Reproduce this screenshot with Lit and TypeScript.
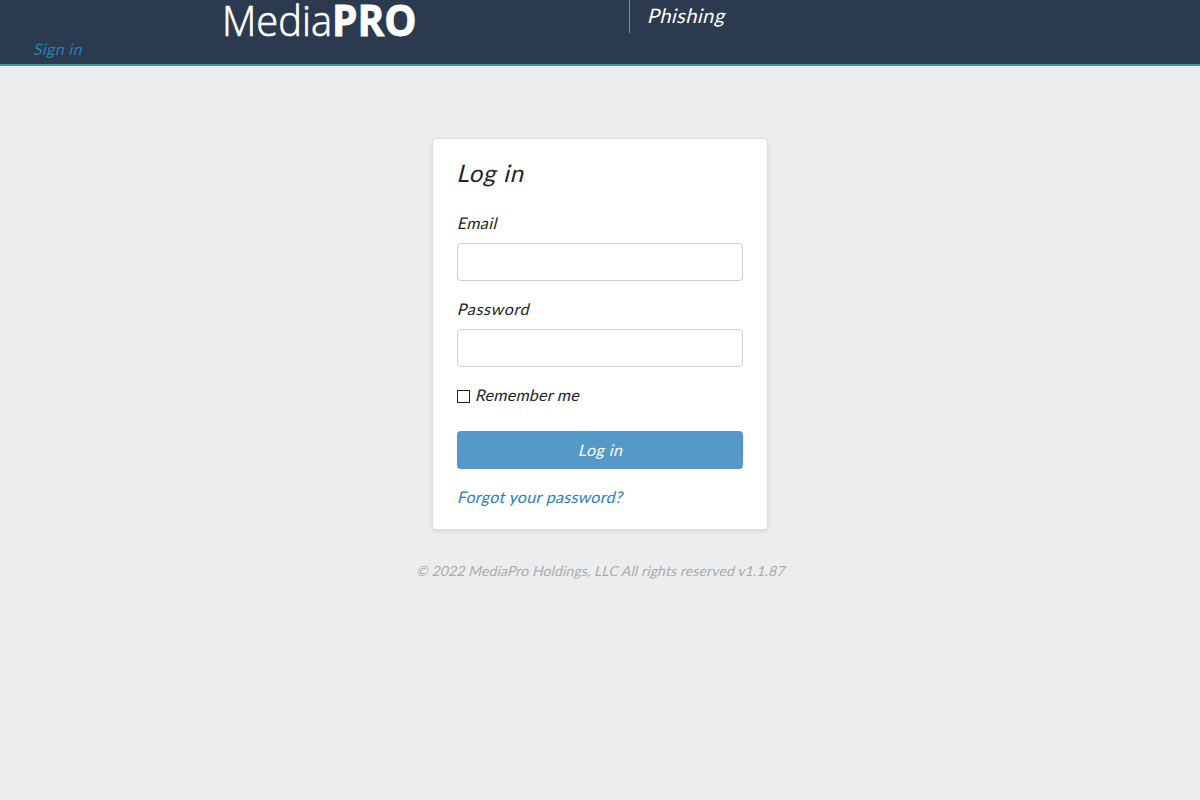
import { LitElement, html, css } from "lit";
import { customElement } from "lit/decorators.js";

@customElement("app-root")
export class AppRoot extends LitElement {
  static styles = css`
    :host {
      display: block;
      min-height: 100vh;
      background: #ecedef;
      color: #212529;
      font: 400 16px/24px Lato, "Open Sans", sans-serif;
    }
    * { box-sizing: border-box; }
    a { color: #2780bd; text-decoration: none; }
    .s { display: inline-block; white-space: nowrap; transform: skewX(-14deg); transform-origin: 0 72%; }
    header {
      height: 66px;
      background: #2c3a50;
      border-bottom: 2px solid #42989e;
      display: grid;
      grid-template-columns: 222px 407px 1fr;
      grid-template-rows: 37px 27px;
    }
    .logo { grid-column: 2; display: block; overflow: visible; fill: #fff; stroke: #fff; font-family: "Open Sans", sans-serif; }
    .light { font-weight: 300; stroke-width: 0.7px; }
    .bold { font-weight: 700; stroke-width: 0.9px; }
    .product {
      height: 33px;
      border-left: 1px solid #808995;
      padding-left: 17px;
      color: #fff;
      font-size: 20px;
      line-height: 31px;
      letter-spacing: 0.45px;
    }
    .signin { grid-column: 1; padding-left: 33px; line-height: 24px; letter-spacing: 0.35px; }
    main { padding-top: 72px; display: flex; flex-direction: column; align-items: center; }
    .card {
      width: 336px;
      height: 392px;
      padding: 20px 24px 0;
      background: #fff;
      border: 1px solid #dcdee1;
      border-radius: 4px;
      box-shadow: 0 2px 4px rgba(0, 0, 0, 0.09);
      display: flex;
      flex-direction: column;
    }
    h1 { margin: 0 0 24px; font-size: 24px; line-height: 28px; font-weight: 400; letter-spacing: 0.75px; }
    label { display: block; height: 24px; margin-bottom: 8px; letter-spacing: 0.4px; }
    .wide { letter-spacing: 0.65px; }
    .field {
      width: 100%;
      height: 38px;
      flex: none;
      margin: 0 0 16px;
      border: 1px solid #ced0d8;
      border-radius: 4px;
      background: #fff;
      outline: none;
    }
    .remember { display: flex; align-items: center; gap: 5px; height: 24px; margin-bottom: 24px; letter-spacing: 0.25px; }
    .box { appearance: none; width: 13px; height: 13px; margin: 2px 0 0; border: 1px solid #222; background: #fff; }
    button {
      height: 38px;
      flex: none;
      border: 0;
      padding: 0;
      border-radius: 4px;
      background: #5599c9;
      color: #fff;
      font: inherit;
      letter-spacing: 0.45px;
    }
    .forgot { margin-top: 16px; letter-spacing: 0.3px; }
    footer { margin-top: 30px; padding-left: 1px; font-size: 14px; line-height: 22px; color: #a9abac; letter-spacing: 0.12px; }
  `;

  render() {
    return html`
      <header>
        <svg class="logo" width="196" height="37" role="img" aria-label="MediaPRO">
          <text class="light" x="0" y="36.3" font-size="42.5" textLength="110" lengthAdjust="spacingAndGlyphs">Media</text>
          <text class="bold" x="110" y="36.3" font-size="42.5" textLength="84.5" lengthAdjust="spacingAndGlyphs">PRO</text>
        </svg>
        <div class="product"><span class="s">Phishing</span></div>
        <a class="signin"><span class="s">Sign in</span></a>
      </header>
      <main>
        <form class="card">
          <h1><span class="s">Log in</span></h1>
          <label for="email"><span class="s">Email</span></label>
          <input class="field" id="email" type="email" />
          <label for="password"><span class="s wide">Password</span></label>
          <input class="field" id="password" type="password" />
          <div class="remember"><input class="box" type="checkbox" /><span class="s">Remember me</span></div>
          <button type="button"><span class="s">Log in</span></button>
          <a class="forgot"><span class="s">Forgot your password?</span></a>
        </form>
        <footer><span class="s">© 2022 MediaPro Holdings, LLC All rights reserved v1.1.87</span></footer>
      </main>
    `;
  }
}
